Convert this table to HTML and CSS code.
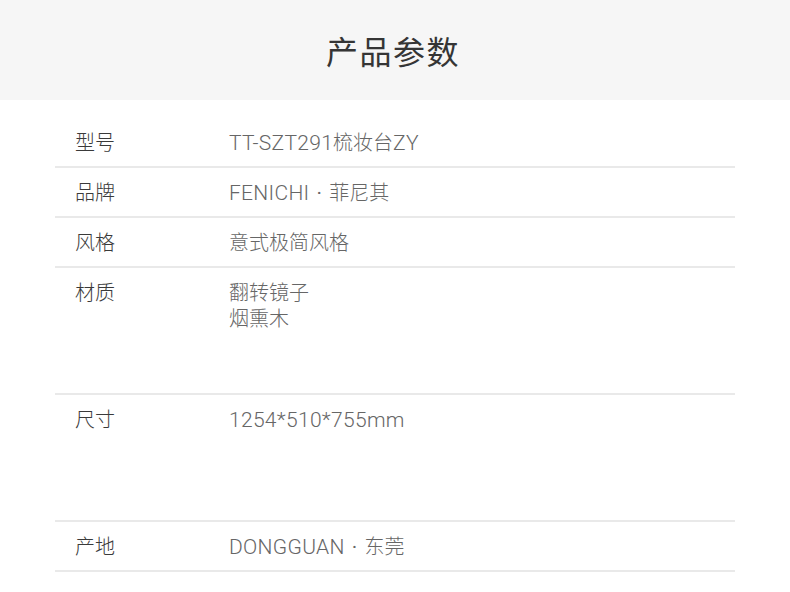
FILE: index.html
```html
<!DOCTYPE html>
<html lang="zh">
<head>
<meta charset="utf-8">
<title>产品参数</title>
<link rel="stylesheet" href="styles.css">
</head>
<body>
<header class="head">
  <h1 class="title">产品参数</h1>
</header>
<section class="specs">
  <div class="row"><div class="label">型号</div><div class="value"><span class="en">TT-SZT291</span>梳妆台<span class="en">ZY</span></div></div>
  <div class="row"><div class="label">品牌</div><div class="value"><span class="en">FENICHI</span><span class="en dot">·</span>菲尼其</div></div>
  <div class="row"><div class="label">风格</div><div class="value">意式极简风格</div></div>
  <div class="row tall"><div class="label">材质</div><div class="value">翻转镜子<br>烟熏木</div></div>
  <div class="row tall"><div class="label">尺寸</div><div class="value"><span class="en">1254*510*755mm</span></div></div>
  <div class="row"><div class="label">产地</div><div class="value"><span class="en">DONGGUAN</span><span class="en dot">·</span>东莞</div></div>
</section>
</body>
</html>
```
FILE: styles.css
```css
html, body {
  margin: 0;
  padding: 0;
  background: #fff;
}
body {
  width: 790px;
  font-family: "Noto Sans CJK SC", sans-serif;
}
.head {
  height: 100px;
  background: #f6f6f6;
  display: flex;
  align-items: center;
  justify-content: center;
}
.title {
  margin: 0;
  font-family: "Noto Sans CJK SC", sans-serif;
  font-weight: 400;
  font-size: 32px;
  letter-spacing: 1.5px;
  color: #353535;
  line-height: 1;
  padding-bottom: 1px;
  margin-left: -4px;
}
.specs {
  margin: 0 55px;
  padding-top: 18px;
}
.row {
  display: flex;
  padding: 11px 0 11px 20px;
  height: 26px;
  border-bottom: 2px solid #e9e9e9;
  font-size: 20px;
  line-height: 26px;
}
.row.tall {
  height: 103px;
}
.label {
  width: 154px;
  flex: none;
  color: #3a3a3a;
  font-weight: 300;
}
.value {
  color: #666;
  font-weight: 300;
}
.en {
  font-family: Roboto, "Noto Sans CJK SC", sans-serif;
  font-size: 21px;
  font-weight: 300;
  letter-spacing: 0.3px;
  line-height: 0;
}
.dot {
  margin: 0 7px;
  font-weight: 400;
}
```
